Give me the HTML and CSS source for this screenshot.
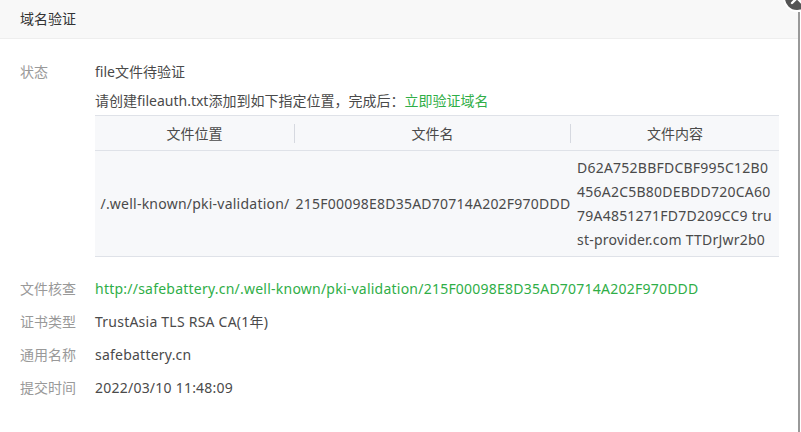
FILE: index.html
```html
<!DOCTYPE html>
<html lang="zh-CN">
<head>
    <meta charset="UTF-8">
    <meta name="viewport" content="width=device-width, initial-scale=1.0">
    <title>域名验证</title>
    <link rel="stylesheet" href="styles.css">
</head>
<body>
    <div class="dialog">
        <div class="dialog-main">
            <div class="dialog-title">域名验证</div>

            <div class="dialog-body">
                <div class="info-row first">
                    <div class="info-label">状态</div>
                    <div class="info-value">
                        <div class="line">file文件待验证</div>
                        <div class="line tip">请创建fileauth.txt添加到如下指定位置，完成后：<a class="link" href="#">立即验证域名</a></div>

                        <table class="file-table">
                            <tr>
                                <th class="col-path"><span class="th-cell">文件位置</span></th>
                                <th class="col-name"><span class="th-cell">文件名</span></th>
                                <th class="col-content"><span class="th-cell last">文件内容</span></th>
                            </tr>
                            <tr>
                                <td class="col-path latin">/.well-known/pki-validation/</td>
                                <td class="col-name latin">215F00098E8D35AD70714A202F970DDD</td>
                                <td class="col-content content-cell latin">D62A752BBFDCBF995C12B0456A2C5B80DEBDD720CA6079A4851271FD7D209CC9 trust-provider.com TTDrJwr2b0</td>
                            </tr>
                        </table>
                    </div>
                </div>

                <div class="info-row check">
                    <div class="info-label">文件核查</div>
                    <div class="info-value latin"><a class="link" href="#">http://safebattery.cn/.well-known/pki-validation/215F00098E8D35AD70714A202F970DDD</a></div>
                </div>
                <div class="info-row">
                    <div class="info-label">证书类型</div>
                    <div class="info-value latin">TrustAsia TLS RSA CA(1年)</div>
                </div>
                <div class="info-row">
                    <div class="info-label">通用名称</div>
                    <div class="info-value latin">safebattery.cn</div>
                </div>
                <div class="info-row">
                    <div class="info-label">提交时间</div>
                    <div class="info-value latin">2022/03/10 11:48:09</div>
                </div>
            </div>
        </div>
        <div class="dialog-edge"></div>

        <a class="close-btn" href="#" title="关闭">
            <svg width="30" height="30" viewBox="0 0 30 30">
                <circle cx="15" cy="15" r="13" fill="#555" stroke="#fff" stroke-width="2"/>
                <path d="M10 10 L20 20 M20 10 L10 20" stroke="#fff" stroke-width="2.4" stroke-linecap="round"/>
            </svg>
        </a>
    </div>
</body>
</html>
```

FILE: styles.css
```css
* {
    box-sizing: border-box;
}
html, body {
    margin: 0;
    padding: 0;
    background: #fff;
}
body {
    font-family: "Noto Sans", "Noto Sans CJK SC", sans-serif;
    font-size: 14px;
    color: #4a4a4a;
    overflow: hidden;
}
.latin {
    letter-spacing: 0.23px;
}
.dialog {
    position: relative;
    display: flex;
    width: 801px;
    height: 432px;
}
.dialog-main {
    flex: 1;
}
.dialog-edge {
    width: 2px;
    margin-top: 12px;
    margin-right: 1px;
    background: #999;
}
.dialog-title {
    height: 39px;
    line-height: 38px;
    padding-left: 20px;
    background: #f8f8f8;
    border-bottom: 1px solid #eee;
    color: #333;
}
.dialog-body {
    padding-top: 23px;
}
.info-row {
    display: flex;
    line-height: 20px;
    margin-bottom: 13px;
}
.info-row.check {
    margin-top: 22px;
}
.info-label {
    width: 95px;
    padding-left: 20px;
    color: #999;
}
.info-value {
    flex: 1;
}
.tip {
    margin-top: 9px;
}
.link {
    color: #2fae47;
    text-decoration: none;
}
.file-table {
    margin-top: 4px;
    width: 684px;
    border-collapse: collapse;
    table-layout: fixed;
    background: #f7f8fa;
    color: #4a4a4a;
    font-size: 14px;
}
.file-table th, .file-table td {
    border-top: 1px solid #dfe2e8;
    border-bottom: 1px solid #dfe2e8;
    padding: 0;
    font-weight: normal;
    text-align: center;
}
.file-table th {
    height: 35px;
}
.th-cell {
    display: block;
    line-height: 19px;
    border-right: 1px solid #d6d9e0;
}
.th-cell.last {
    border-right: none;
}
.col-path {
    width: 200px;
}
.col-name {
    width: 276px;
}
.col-content {
    width: 208px;
}
.file-table td {
    height: 106px;
    white-space: nowrap;
}
.file-table td.content-cell {
    white-space: normal;
    word-break: break-all;
    text-align: left;
    padding: 4px 6px 4px 6px;
    line-height: 24px;
}
.close-btn {
    position: absolute;
    top: -17px;
    right: -11px;
}
```
